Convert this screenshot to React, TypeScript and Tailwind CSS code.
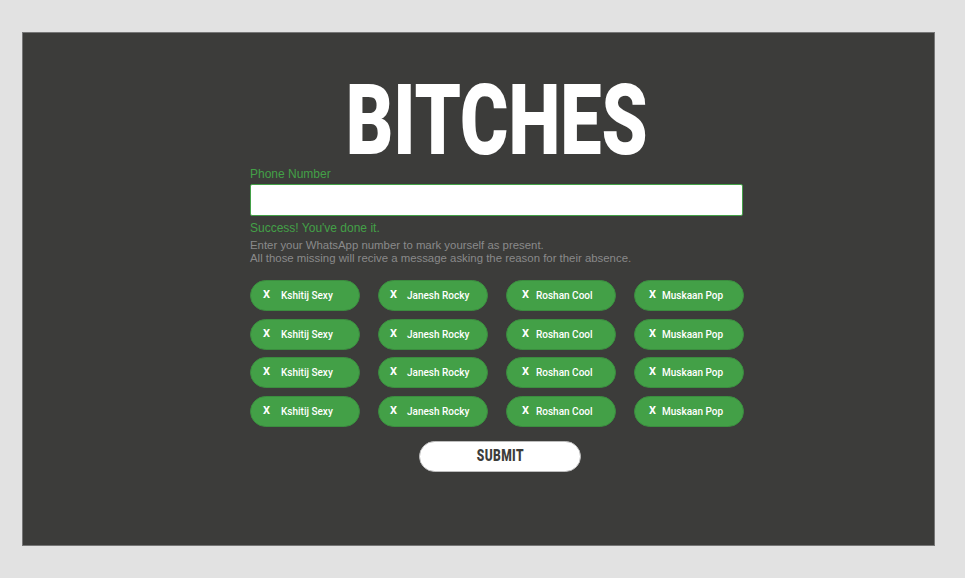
import React from "react";

const names = ["Kshitij Sexy", "Janesh Rocky", "Roshan Cool", "Muskaan Pop"];
const colStyle = [
  { pl: "pl-[12px]", gap: "gap-[11px]" },
  { pl: "pl-[11px]", gap: "gap-[10px]" },
  { pl: "pl-[15px]", gap: "gap-[7px]" },
  { pl: "pl-[14px]", gap: "gap-[6px]" },
];

function Chip({ name, col }: { name: string; col: number }) {
  const s = colStyle[col];
  return (
    <div
      className={`h-[31px] rounded-full bg-[#43a047] border border-[#3b8d3f] flex items-center ${s.pl} ${s.gap} text-white text-[10px] font-medium`}
      style={{ fontFamily: "Roboto, 'Liberation Sans', sans-serif" }}
    >
      <span className="font-bold text-[11px] w-[7px]">X</span>
      <span>{name}</span>
    </div>
  );
}

export default function App() {
  const rows = [0, 1, 2, 3];
  return (
    <div className="w-[965px] h-[578px] bg-[#e2e2e2] pt-[32px] pl-[22px]">
      <div className="w-[913px] h-[514px] bg-[#3c3c3a] border border-[#767676]">
        <div className="ml-[227px] w-[494px] flex flex-col">
          <div className="h-[96px] mt-[38px] flex justify-center">
            <div
              className="text-white text-[99px] leading-[99px] font-black scale-x-[0.745] whitespace-nowrap"
              style={{ fontFamily: "Roboto, 'Liberation Sans', sans-serif" }}
            >
              BITCHES
            </div>
          </div>
          <div
            className="flex flex-col"
            style={{ fontFamily: "'Liberation Sans', Arial, sans-serif" }}
          >
            <label className="text-[12px] leading-[14px] text-[#43a047]">Phone Number</label>
            <input
              className="mt-[3px] h-[32px] w-[493px] bg-white border border-[#43a047] rounded-[2px] outline-none"
              type="text"
            />
            <div className="mt-[5px] text-[12px] leading-[14px] text-[#43a047]">
              Success! You've done it.
            </div>
            <div className="mt-[4px] text-[11.4px] leading-[13px] text-[#8a8a8a]">
              Enter your WhatsApp number to mark yourself as present.
              <br />
              All those missing will recive a message asking the reason for their absence.
            </div>
          </div>
          <div className="mt-[15px] grid grid-cols-[110px_110px_110px_110px] gap-x-[18px] gap-y-[7.5px]">
            {rows.map((r) =>
              names.map((n, c) => <Chip key={`${r}-${c}`} name={n} col={c} />)
            )}
          </div>
          <div className="mt-[14px] ml-[169px] w-[162px] h-[31px] rounded-full bg-white border border-[#bdbdbd] flex items-center justify-center">
            <span
              className="text-[#3c3c3a] text-[16px] font-black scale-x-[0.75] tracking-[0.5px]"
              style={{ fontFamily: "Roboto, 'Liberation Sans', sans-serif" }}
            >
              SUBMIT
            </span>
          </div>
        </div>
      </div>
    </div>
  );
}
